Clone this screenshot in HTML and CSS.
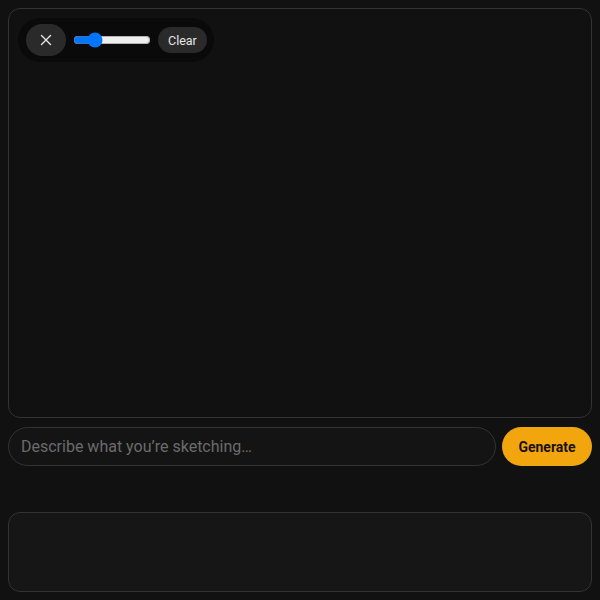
FILE: index.html
```html
<!DOCTYPE html>
<html lang="en">
<head>
<meta charset="utf-8">
<title>Sketch</title>
<link rel="stylesheet" href="styles.css">
</head>
<body>
<main class="app">
  <section class="canvas-wrap">
    <div class="toolbar">
      <button class="tool-btn close-btn" aria-label="Close">
        <svg width="12" height="12" viewBox="0 0 12 12"><path d="M1.5 1.5 L10.5 10.5 M10.5 1.5 L1.5 10.5" stroke="#e6e6e6" stroke-width="1.4" stroke-linecap="round"/></svg>
      </button>
      <input class="size-slider" type="range" min="1" max="40" value="10">
      <button class="tool-btn clear-btn">Clear</button>
    </div>
  </section>
  <div class="prompt-row">
    <input class="prompt-input" type="text" placeholder="Describe what you’re sketching…">
    <button class="generate-btn">Generate</button>
  </div>
  <section class="output"></section>
</main>
</body>
</html>
```
FILE: styles.css
```css
html, body {
  margin: 0;
  background: #111111;
}
body {
  padding: 8px;
  font-family: Roboto, "Liberation Sans", sans-serif;
  color: #ddd;
}
.app {
  display: flex;
  flex-direction: column;
}
.canvas-wrap {
  position: relative;
  height: 410px;
  box-sizing: border-box;
  border: 1px solid #333;
  border-radius: 12px;
  background: #111111;
}
.toolbar {
  position: absolute;
  top: 9px;
  left: 9px;
  height: 44px;
  box-sizing: border-box;
  padding: 6px 7px 6px 8px;
  display: flex;
  align-items: center;
  gap: 7px;
  background: #0a0a0a;
  border-radius: 22px;
}
.tool-btn {
  border: none;
  background: #2a2a2a;
  color: #e6e6e6;
  font-family: inherit;
  cursor: pointer;
}
.close-btn {
  width: 40px;
  height: 32px;
  border-radius: 16px;
  display: flex;
  align-items: center;
  justify-content: center;
  padding: 0;
}
.size-slider {
  width: 78px;
  margin: 0;
}
.clear-btn {
  height: 26px;
  padding: 0 10px;
  border-radius: 13px;
  font-size: 12.5px;
}
.prompt-row {
  display: flex;
  gap: 6px;
  margin-top: 9px;
}
.prompt-input {
  flex: 1;
  height: 39px;
  box-sizing: border-box;
  border: 1px solid #333;
  border-radius: 20px;
  background: #141414;
  color: #ddd;
  padding: 0 12px;
  font-family: inherit;
  font-size: 16px;
  outline: none;
}
.prompt-input::placeholder {
  color: #6b6b6b;
}
.generate-btn {
  width: 90px;
  height: 39px;
  border: none;
  border-radius: 20px;
  background: #f2a50c;
  color: #1a1208;
  font-family: inherit;
  font-weight: 700;
  font-size: 14px;
  cursor: pointer;
}
.output {
  margin-top: 46px;
  height: 80px;
  box-sizing: border-box;
  border: 1px solid #333;
  border-radius: 12px;
  background: #161616;
}
```
